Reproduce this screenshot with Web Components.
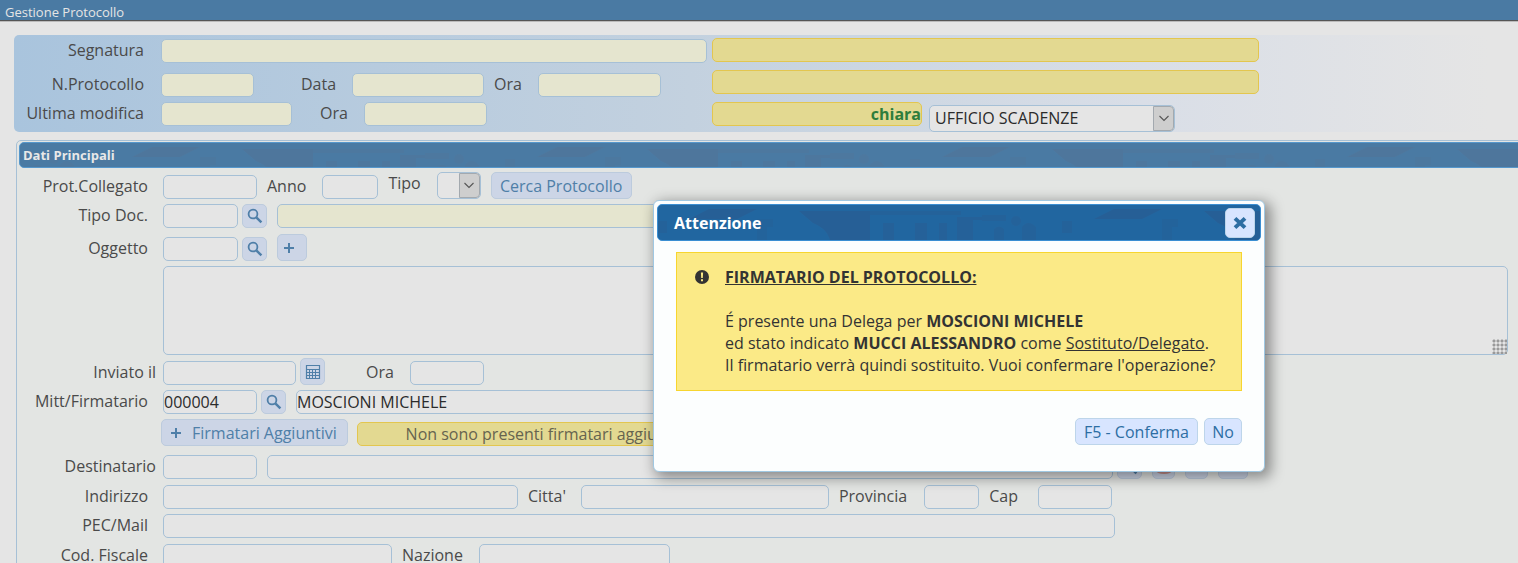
<!DOCTYPE html>
<html lang="it">
<head>
<meta charset="utf-8">
<meta name="viewport" content="width=device-width, initial-scale=1">
<title>Gestione Protocollo</title>
<style>
    :root{
        --page: #e5e5e5;
        --panel: #e3e5e3;
        --bar: #4a7aa3;
        --line: #a6c0d6;
        --text: #4a4a4a;
        --link: #4f7fa8;
        --button: #ccd5e6;
        --button-line: #bccbdd;
    }

    body{
        background-color: var(--page);
        color: var(--text);
        font-family: 'Open Sans', 'Noto Sans', sans-serif;
        font-size: 16px;
        line-height: 22px;
        margin: 0;
        overflow: hidden;
    }
</style>
</head>
<body>

<protocol-page></protocol-page>

<script>
const icons = {
    search: `<svg width="16" height="16" viewBox="0 0 16 16" fill="none" stroke="currentColor">
        <circle cx="6" cy="6" r="4.4" stroke-width="1.8"/><path d="M9.3 9.3L14.4 14.4" stroke-width="2.4"/></svg>`,
    plus: `<svg width="12" height="12" viewBox="0 0 12 12" stroke="currentColor" stroke-width="2">
        <path d="M1 6H11M6 1V11"/></svg>`,
    calendar: `<svg width="16" height="16" viewBox="0 0 16 16" fill="none" stroke="currentColor">
        <path d="M1.5 1.5H14.5V14.5H1.5Z" stroke-width="1.2"/>
        <path d="M1 5.5H15M1 8.5H15M1 11.5H15M4.5 6V15M7.5 6V15M10.5 6V15"/></svg>`,
    close: `<svg width="14" height="14" viewBox="0 0 14 14" stroke="currentColor" stroke-width="4">
        <path d="M2 2.4L12 11.6M12 2.4L2 11.6"/></svg>`,
    person: `<svg width="18" height="16" viewBox="0 0 18 16" fill="#c9908c">
        <circle cx="9" cy="4.5" r="3.5"/><path d="M0 11Q9 7 18 11Q16 15 9 15Q2 15 0 11Z"/></svg>`,
    edit: `<svg width="18" height="16" viewBox="0 0 18 16" fill="none" stroke="#6a7078" stroke-width="1.6">
        <path d="M1 11.5H17M5 8L12 1L14 3L7 10H5Z"/></svg>`,
    chevron: `<svg width="10" height="7" viewBox="0 0 10 7" fill="none" stroke="#555" stroke-width="1.1">
        <path d="M.5 1L5 5.5L9.5 1"/></svg>`,
    alert: `<svg width="14" height="14" viewBox="0 0 14 14">
        <circle cx="7" cy="7" r="7" fill="#333"/><path d="M5.9 2.4H8.1L7.8 8H6.2ZM6 9.2H8V11.2H6Z" fill="#fbea87"/></svg>`
};

const skyline = (offset, colour) => `
    <svg class="skyline" width="100%" height="100%" aria-hidden="true">
        <defs>
            <pattern id="city" width="405" height="40" x="${offset}" patternUnits="userSpaceOnUse">
                <g fill="${colour}">
                    <path d="M132 4H180L160 14H112Z"/>
                    <path d="M222 6H293V40H254Q252 24 236 18Z"/>
                    <path d="M180 14H196V22H190V40H180Z" opacity="0.5"/>
                    <path d="M293 6H384V10H293Z" opacity="0.6"/>
                    <path d="M306 18H317V40H306ZM338 18H350V40H338ZM362 18H370V40H362Z" opacity="0.7"/>
                    <path d="M380 12H405V15H396V40H380Z" opacity="0.7"/>
                    <path d="M0 10H24V16H0ZM40 22Q46 14 54 22V40H40Z" opacity="0.6"/>
                    <circle cx="34" cy="16" r="5" opacity="0.6"/>
                    <path d="M80 16H90V28H80ZM12 24Q17 19 22 24V40H12Z" opacity="0.6"/>
                </g>
            </pattern>
        </defs>
        <rect width="100%" height="100%" fill="url(#city)"/>
    </svg>`;

class TitleBar extends HTMLElement {

    constructor() {
        super();
        this.shadow = this.attachShadow({ mode: 'open' });
    }

    connectedCallback() {
        this.shadow.innerHTML =
        `
        <style>
            :host{
                background-color: var(--bar);
                border-bottom: 1px solid #555;
                box-shadow: 0 1px 0 #bbb;
                box-sizing: border-box;
                color: #e5e5e5;
                display: block;
                font-size: 13px;
                height: 21px;
                line-height: 18px;
                padding: 3px 5px 0;
            }
        </style>
        <slot></slot>`;
    }
}

class FormRow extends HTMLElement {

    constructor() {
        super();
        this.shadow = this.attachShadow({ mode: 'open' });
    }

    connectedCallback() {
        this.shadow.innerHTML =
        `
        <style>
            :host{
                align-items: flex-end;
                display: flex;
                margin-top: ${this.getAttribute('space') || 5}px;
            }
        </style>
        <slot></slot>`;
    }
}

/* One labelled control. kind: text (default), select or area. */
class FormField extends HTMLElement {

    constructor() {
        super();
        this.shadow = this.attachShadow({ mode: 'open' });
    }

    control() {
        const value = this.getAttribute('value') || '';
        const name = this.getAttribute('label') || this.getAttribute('name') || '';
        const readonly = this.hasAttribute('tone') ? 'readonly' : '';

        if(this.getAttribute('kind') == 'select'){
            return `<div class="select"><select id="control" aria-label="${name}"><option>${value}</option></select>
                <span class="arrow">${icons.chevron}</span></div>`;
        }

        if(this.getAttribute('kind') == 'area'){
            return `<textarea id="control" aria-label="${name}"></textarea>`;
        }

        return `<input id="control" type="text" aria-label="${name}" value="${value}" ${readonly}>`;
    }

    connectedCallback() {
        const label = this.getAttribute('label');
        const width = this.getAttribute('width');
        const labelWidth = this.getAttribute('label-width');

        this.shadow.innerHTML =
        `
        <style>
            :host{
                align-items: flex-start;
                display: flex;
                flex: ${width ? 'none' : '1'};
                margin-left: ${this.getAttribute('before') || 0}px;
            }

            label{
                flex: none;
                margin-right: ${this.getAttribute('gap') || (labelWidth ? 15 : 16)}px;
                text-align: right;
                width: ${labelWidth ? labelWidth + 'px' : 'auto'};
            }

            input, select, textarea{
                background-color: var(--page);
                border: 1px solid var(--line);
                border-radius: 5px;
                box-sizing: border-box;
                color: #2b2b2b;
                display: block;
                font: inherit;
                height: 24px;
                line-height: 22px;
                margin: 0;
                outline: none;
                padding: 0;
                width: ${width ? width + 'px' : '100%'};
            }

            textarea{
                height: 89px;
                resize: vertical;
            }

            textarea::-webkit-resizer{
                background-image: radial-gradient(circle, #999 1px, transparent 2px);
                background-size: 4px 4px;
                clip-path: polygon(100% 0, 100% 100%, 0 100%);
            }

            select{
                appearance: none;
                height: 27px;
                line-height: 25px;
                padding: 0 5px;
            }

            .select{
                display: grid;
            }

            .select > *{
                grid-area: 1 / 1;
            }

            .arrow{
                align-items: center;
                background-color: #cecece;
                border: 1px solid #a3a9af;
                border-radius: 0 4px 4px 0;
                box-sizing: border-box;
                display: flex;
                height: 25px;
                justify-content: center;
                justify-self: end;
                margin: 1px;
                pointer-events: none;
                width: 21px;
            }

            :host([tone=cream]) input{
                background-color: #e5e5cf;
            }

            :host([tone=yellow]) input{
                background-color: #e3d991;
                border-color: #e3c64f;
            }

            :host([tone=yellow][strong]) input{
                color: #2e7d3c;
                font-weight: bold;
                text-align: right;
            }

            :host([centered]) input{
                color: #66644f;
                text-align: center;
            }
        </style>
        ${label ? `<label for="control">${label}</label>` : ''}
        ${this.control()}`;
    }
}

class ActionButton extends HTMLElement {

    constructor() {
        super();
        this.shadow = this.attachShadow({ mode: 'open' });
    }

    connectedCallback() {
        const icon = icons[this.getAttribute('icon')] || '';
        const width = this.getAttribute('width');

        this.shadow.innerHTML =
        `
        <style>
            :host{
                display: block;
                flex: none;
                margin-left: ${this.getAttribute('before') || 0}px;
            }

            button{
                align-items: center;
                background-color: var(--button);
                border: 1px solid var(--button-line);
                border-radius: 5px;
                box-sizing: border-box;
                color: var(--link);
                display: flex;
                font: inherit;
                gap: 10px;
                height: ${this.getAttribute('height') || 27}px;
                justify-content: center;
                line-height: 22px;
                padding: 0;
                width: ${width}px;
            }

            :host([icon=plus]) button{
                justify-content: flex-start;
                padding-left: ${this.textContent ? 8 : 5}px;
            }

            svg{
                display: block;
            }
        </style>
        <button type="button" aria-label="${this.getAttribute('name') || this.textContent}">${icon}<slot></slot></button>`;
    }
}

class FormPanel extends HTMLElement {

    constructor() {
        super();
        this.shadow = this.attachShadow({ mode: 'open' });
    }

    connectedCallback() {
        this.shadow.innerHTML =
        `
        <style>
            :host{
                background-color: var(--panel);
                border: 1px solid var(--line);
                border-radius: 5px;
                display: block;
                margin: 8px -8px 0 16px;
                padding: 1px 2px 20px;
            }

            header{
                background-color: var(--bar);
                border: 1px solid #5597cc;
                border-radius: 5px;
                box-sizing: border-box;
                display: grid;
                height: 26px;
                overflow: hidden;
            }

            header > *{
                grid-area: 1 / 1;
            }

            h2{
                color: #e8e8e8;
                font-size: 13px;
                line-height: 24px;
                margin: 0;
                padding-left: 3px;
            }

            .body{
                padding: 0 15px 0 14px;
            }
        </style>
        <header>${skyline(0, '#4e769c')}<h2>${this.getAttribute('heading')}</h2></header>
        <div class="body"><slot></slot></div>`;
    }
}

class MessageDialog extends HTMLElement {

    constructor() {
        super();
        this.shadow = this.attachShadow({ mode: 'open' });
    }

    connectedCallback() {
        this.shadow.innerHTML =
        `
        <style>
            :host{
                --button: #d8e5ff;
                --button-line: #bdd5ea;
                --link: #2d6ea3;
                background-color: #fcfefe;
                border: 1px solid #a0c8e2;
                border-radius: 6px;
                box-shadow: 4px 4px 14px 2px rgba(0, 0, 0, 0.4);
                box-sizing: border-box;
                display: block;
                left: 653px;
                padding: 3px;
                position: absolute;
                top: 200px;
                width: 612px;
            }

            header{
                background-color: #2166a0;
                border: 1px solid #3a8ed2;
                border-radius: 5px;
                display: grid;
                height: 35px;
                overflow: hidden;
            }

            header > *{
                grid-area: 1 / 1;
            }

            .heading{
                align-items: center;
                display: flex;
                justify-content: space-between;
                padding: 0 5px 0 16px;
            }

            h2{
                color: #fff;
                font-size: 16px;
                line-height: 22px;
                margin: 0;
            }

            .message{
                align-items: flex-start;
                background-color: #fbea87;
                border: 1px solid #f7d52f;
                color: #333;
                display: flex;
                gap: 16px;
                margin: 11px 19px 0;
                padding: 13px 12px 14px 18px;
            }

            .message svg{
                flex: none;
                margin-top: 4px;
            }

            footer{
                display: flex;
                gap: 6px;
                justify-content: flex-end;
                padding: 27px 19px 23px;
            }
        </style>
        <header>
            ${skyline(-81, '#265f96')}
            <div class="heading">
                <h2>${this.getAttribute('heading')}</h2>
                <action-button icon="close" name="Chiudi" width="30" height="30"></action-button>
            </div>
        </header>
        <div class="message">${icons.alert}<slot></slot></div>
        <footer><slot name="actions"></slot></footer>`;

        this.setAttribute('role', 'dialog');
        this.setAttribute('aria-label', this.getAttribute('heading'));
    }
}

class ProtocolPage extends HTMLElement {

    constructor() {
        super();
        this.shadow = this.attachShadow({ mode: 'open' });
    }

    connectedCallback() {
        this.shadow.innerHTML =
        `
        <style>
            :host{
                display: block;
                height: 100vh;
                overflow: hidden;
                position: relative;
            }

            .summary{
                background-image: linear-gradient(to right, #a9c4dd, #c3d1df 45%, #d9dee7 75%, #e5e5e5 98%);
                border-radius: 5px 0 0 5px;
                display: flex;
                gap: 5px;
                margin: 14px 0 0 14px;
            }

            .left{
                padding-bottom: 5px;
                width: 693px;
            }

            .right{
                padding-top: 3px;
                width: 547px;
            }

            .operator{
                align-items: flex-start;
                display: flex;
                margin-top: 8px;
            }

            .office{
                margin-top: 3px;
            }

            .raised{
                align-self: flex-start;
            }

            .delegate{
                font-weight: bold;
            }
        </style>

        <title-bar>Gestione Protocollo</title-bar>

        <section class="summary">
            <div class="left">
                <form-row space="4">
                    <form-field label="Segnatura" label-width="130" gap="17" width="546" tone="cream"></form-field>
                </form-row>
                <form-row space="10">
                    <form-field label="N.Protocollo" label-width="130" gap="17" width="93" tone="cream"></form-field>
                    <form-field label="Data" before="47" width="132" tone="cream"></form-field>
                    <form-field label="Ora" before="10" width="123" tone="cream"></form-field>
                </form-row>
                <form-row>
                    <form-field label="Ultima modifica" label-width="130" gap="17" width="131" tone="cream"></form-field>
                    <form-field label="Ora" before="28" width="123" tone="cream"></form-field>
                </form-row>
            </div>
            <div class="right">
                <form-row space="0"><form-field name="Classificazione" tone="yellow"></form-field></form-row>
                <form-row space="8"><form-field name="Fascicolo" tone="yellow"></form-field></form-row>
                <div class="operator">
                    <form-field name="Operatore" width="210" tone="yellow" strong value="chiara"></form-field>
                    <form-field class="office" name="Ufficio" kind="select" before="7" width="246" value="UFFICIO SCADENZE"></form-field>
                </div>
            </div>
        </section>

        <form-panel heading="Dati Principali">
            <form-row space="4">
                <form-field label="Prot.Collegato" label-width="115" width="94"></form-field>
                <form-field label="Anno" before="10" width="56"></form-field>
                <form-field class="raised" label="Tipo" kind="select" before="10" width="44" value=""></form-field>
                <action-button before="10" width="141">Cerca Protocollo</action-button>
            </form-row>
            <form-row>
                <form-field label="Tipo Doc." label-width="115" width="75"></form-field>
                <action-button icon="search" name="Cerca tipo documento" before="4" width="25" height="24"></action-button>
                <form-field name="Descrizione tipo" before="10" width="500" tone="cream"></form-field>
            </form-row>
            <form-row space="6">
                <form-field label="Oggetto" label-width="115" width="75"></form-field>
                <action-button icon="search" name="Cerca oggetto" before="4" width="25" height="24"></action-button>
                <action-button icon="plus" name="Aggiungi oggetto" before="10" width="30"></action-button>
            </form-row>
            <form-row>
                <form-field name="Testo oggetto" kind="area" before="130"></form-field>
            </form-row>
            <form-row space="3">
                <form-field label="Inviato il" label-width="123" gap="7" width="133"></form-field>
                <action-button icon="calendar" name="Calendario" before="4" width="25"></action-button>
                <form-field label="Ora" before="41" width="74"></form-field>
            </form-row>
            <form-row>
                <form-field label="Mitt/Firmatario" label-width="115" width="94" value="000004"></form-field>
                <action-button icon="search" name="Cerca firmatario" before="4" width="25" height="24"></action-button>
                <form-field name="Nome firmatario" before="10" width="600" value="MOSCIONI MICHELE"></form-field>
            </form-row>
            <form-row>
                <action-button icon="plus" before="128" width="187">Firmatari Aggiuntivi</action-button>
                <form-field name="Firmatari" before="9" width="380" tone="yellow" centered value="Non sono presenti firmatari aggiuntivi"></form-field>
            </form-row>
            <form-row space="9">
                <form-field label="Destinatario" label-width="123" gap="7" width="94"></form-field>
                <form-field name="Nome destinatario" before="10" width="846"></form-field>
                <action-button icon="search" name="Cerca destinatario" before="4" width="25" height="24"></action-button>
                <action-button icon="person" name="Anagrafica" before="10" width="23" height="24"></action-button>
                <action-button icon="edit" name="Modifica" before="10" width="23" height="24"></action-button>
                <action-button icon="plus" name="Aggiungi" before="10" width="30" height="24"></action-button>
            </form-row>
            <form-row space="6">
                <form-field label="Indirizzo" label-width="115" width="355"></form-field>
                <form-field label="Citta'" before="10" gap="15" width="248"></form-field>
                <form-field label="Provincia" before="10" gap="17" width="55"></form-field>
                <form-field label="Cap" before="10" gap="20" width="74"></form-field>
            </form-row>
            <form-row>
                <form-field label="PEC/Mail" label-width="115" width="952"></form-field>
            </form-row>
            <form-row space="6">
                <form-field label="Cod. Fiscale" label-width="115" width="229"></form-field>
                <form-field label="Nazione" before="10" width="191"></form-field>
            </form-row>
        </form-panel>

        <message-dialog heading="Attenzione">
            <div>
                <u class="delegate">FIRMATARIO DEL PROTOCOLLO:</u><br><br>
                É presente una Delega per <b>MOSCIONI MICHELE</b><br>
                ed stato indicato <b>MUCCI ALESSANDRO</b> come <u>Sostituto/Delegato</u>.<br>
                Il firmatario verrà quindi sostituito. Vuoi confermare l'operazione?
            </div>
            <action-button slot="actions" width="123">F5 - Conferma</action-button>
            <action-button slot="actions" width="38">No</action-button>
        </message-dialog>`;
    }
}

customElements.define('title-bar', TitleBar);
customElements.define('form-row', FormRow);
customElements.define('form-field', FormField);
customElements.define('action-button', ActionButton);
customElements.define('form-panel', FormPanel);
customElements.define('message-dialog', MessageDialog);
customElements.define('protocol-page', ProtocolPage);
</script>
</body>
</html>
